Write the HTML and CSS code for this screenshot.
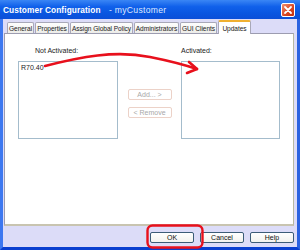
FILE: index.html
```html
<!DOCTYPE html>
<html>
<head>
<meta charset="utf-8">
<link rel="stylesheet" href="styles.css">
</head>
<body>
<div class="window">
  <div class="titlebar">
    <span class="title"><b>Customer Configuration</b> <span class="sub">- myCustomer</span></span>
    <span class="close"><svg width="10" height="10" viewBox="0 0 10 10"><path d="M2 2 L8 8 M8 2 L2 8" stroke="#fff" stroke-width="1.8" stroke-linecap="round"/></svg></span>
  </div>
  <div class="client">
    <div class="tabs">
      <div class="tab w1">General</div>
      <div class="tab w2">Properties</div>
      <div class="tab w3">Assign Global Policy</div>
      <div class="tab w4">Administrators</div>
      <div class="tab w5">GUI Clients</div>
      <div class="tab sel w6">Updates</div>
    </div>
    <div class="panel">
      <div class="col left">
        <div class="label">Not Activated:</div>
        <div class="list"><div class="item">R70.40</div></div>
      </div>
      <div class="mid">
        <div class="btn dis">Add... &gt;</div>
        <div class="btn dis">&lt; Remove</div>
      </div>
      <div class="col right">
        <div class="label">Activated:</div>
        <div class="list"></div>
      </div>
    </div>
    <div class="buttons">
      <div class="btn main">OK</div>
      <div class="btn main">Cancel</div>
      <div class="btn main">Help</div>
    </div>
  </div>
  <svg class="overlay" width="300" height="250" viewBox="0 0 300 250">
    <path d="M45 66 C 80 57, 115 50, 150 57 C 170 61, 185 65, 197 69" fill="none" stroke="#e8101c" stroke-width="2.6" stroke-linecap="round"/>
    <path d="M189 62 L197 69 L187 73" fill="none" stroke="#e8101c" stroke-width="2.6" stroke-linecap="round" stroke-linejoin="round"/>
    <rect x="147.5" y="225.5" width="55" height="22" rx="5" fill="none" stroke="#e8101c" stroke-width="2.4"/>
  </svg>
</div>
</body>
</html>
```
FILE: styles.css
```css
html, body { margin: 0; padding: 0; }
body { width: 300px; height: 250px; overflow: hidden; font-family: "Liberation Sans", Arial, sans-serif; font-size: 7px; color: #222; }
.window {
  position: relative;
  width: 300px; height: 250px; box-sizing: border-box;
  display: flex; flex-direction: column;
  background: #1f5ce6;
  border-left: 3px solid #3d78f0; border-right: 3px solid #2b62e0; border-bottom: 3px solid #0a3fd0;
}
.titlebar {
  height: 19px; margin: 0 -3px; padding: 0 5px 0 3px;
  display: flex; align-items: center; justify-content: space-between;
  background: linear-gradient(#3a86f5 0%, #1060ea 35%, #0a56e0 70%, #0b4fd8 100%);
  color: #fff;
}
.title { font-family: "Liberation Sans", Arial, sans-serif; font-size: 8px; letter-spacing: 0.1px; white-space: nowrap; }
.title b { font-size: 8.3px; }
.title .sub { color: #dfe8ff; margin-left: 6px; font-size: 8.6px; letter-spacing: 0.3px; }
.close {
  width: 14px; height: 14px; box-sizing: border-box;
  display: flex; align-items: center; justify-content: center;
  background: linear-gradient(135deg, #f09070, #d84420 60%, #c03010);
  border: 1px solid #fff; border-radius: 2px;
}
.client {
  flex: 1; background: #dcdcf8;
  display: flex; flex-direction: column;
  padding: 1px 0 0 1px;
}
.tabs { display: flex; align-items: flex-end; height: 13px; padding-left: 3px; gap: 1px; }
.tab {
  height: 11px; box-sizing: border-box;
  border: 1px solid #a8a8b8; border-bottom: none;
  background: linear-gradient(#fefefe, #ecece8);
  display: flex; align-items: center; justify-content: center;
  border-radius: 2px 2px 0 0;
  font-size: 6.6px; white-space: nowrap; letter-spacing: -0.05px;
}
.tab.sel { height: 14px; border-top: 2px solid #f0b030; background: #fff; margin-bottom: -1px; position: relative; }
.w1 { width: 27px; } .w2 { width: 34px; } .w3 { width: 63px; } .w4 { width: 45px; } .w5 { width: 37px; } .w6 { width: 33px; }
.panel {
  height: 193px; width: 290px; box-sizing: border-box;
  background: #fff; border: 1px solid #9c9cb0; border-right-color: #b8b8a0; border-bottom: 2px solid #c8c4b0;
  display: flex; padding: 12px 0 0 13px;
}
.col { display: flex; flex-direction: column; }
.label { height: 15px; line-height: 10px; }
.left .label { padding-left: 17px; }
.list { width: 100px; height: 78px; box-sizing: border-box; border: 1px solid #a4bccc; padding: 2px 0 0 2px; }
.right .list { width: 99px; }
.item { line-height: 8px; }
.mid { width: 63px; display: flex; flex-direction: column; align-items: center; padding-top: 43px; gap: 7px; }
.btn {
  box-sizing: border-box; display: flex; align-items: center; justify-content: center;
  border-radius: 2px;
}
.btn.dis { width: 44px; height: 11px; border: 1px solid #ecd2c8; color: #a8a8a8; }
.buttons { display: flex; justify-content: flex-end; gap: 6px; padding: 6px 3px 0 0; }
.btn.main { width: 44px; height: 11px; border: 1px solid #3c5c78; background: linear-gradient(#fff, #f2f2ee); color: #111; }
.overlay { position: absolute; left: -3px; top: 0; pointer-events: none; }
```
